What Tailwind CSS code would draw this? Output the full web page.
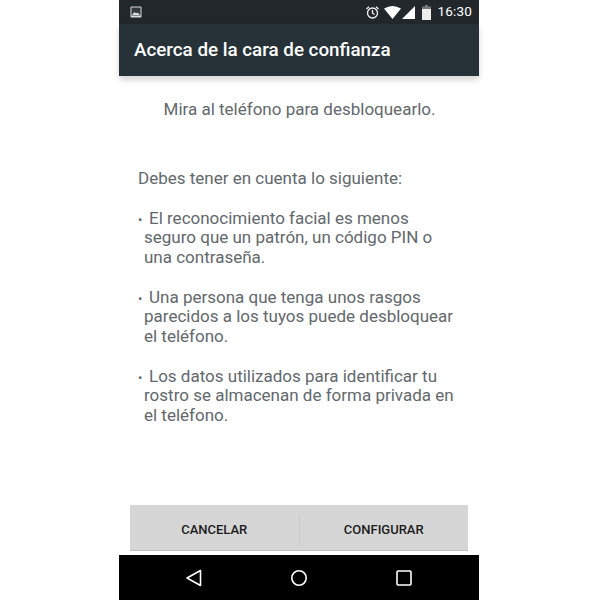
<!DOCTYPE html>
<html lang="es">
<head>
<meta charset="UTF-8">
<title>Acerca de la cara de confianza</title>
<script src="https://cdn.jsdelivr.net/npm/@tailwindcss/browser@4"></script>
</head>
<body class="bg-white font-['Roboto',sans-serif]">
<div class="mx-auto w-[360px] h-[600px] flex flex-col bg-white relative left-[-1px]">
  <!-- status bar -->
  <div class="h-[24px] bg-[#22272b] flex items-center pl-[11px] pr-[7px] text-white">
    <svg width="12" height="12" viewBox="0 0 12 12"><rect x="0.5" y="0.5" width="11" height="11" rx="1" fill="#d8d8d8"/><rect x="1.5" y="1.5" width="9" height="8" fill="#33383c"/><path d="M2 9l2.5-3 1.5 1.5 1.5-1 2.5 2.5z" fill="#e4e4e4"/></svg>
    <svg class="ml-auto" width="15" height="15" viewBox="0 0 15 15" fill="none" stroke="#f2f2f2" stroke-width="1.3"><circle cx="7.5" cy="8" r="5"/><path d="M7.5 5v3.2l2 1.3M1.5 4L4 1.8M13.500 4L11 1.800"/></svg>
    <svg class="ml-[4px]" width="17" height="13" viewBox="0 0 17 13"><path d="M0 2.500Q8.500-2.500 17 2.500L8.500 13z" fill="#fff"/></svg>
    <svg class="ml-[1px]" width="13" height="13" viewBox="0 0 13 13"><path d="M13 0V13H0z" fill="#fff"/></svg>
    <svg class="ml-[7px]" width="9" height="15" viewBox="0 0 9 15"><path d="M3 0h3v1.500h3V4H0V1.500h3z" fill="#777"/><rect y="4" width="9" height="11" fill="#ededed"/></svg>
    <span class="ml-[6px] text-[13.500px] leading-none tracking-[0.2px]">16:30</span>
  </div>
  <!-- app bar -->
  <div class="h-[52px] bg-[#263238] flex items-center pl-[15px] text-white text-[18.800px] font-medium shadow-[0_4px_6px_rgba(0,0,0,0.16)]">Acerca de la cara de confianza</div>
  <!-- content -->
  <div class="flex-1 text-[#62686c] text-[17px] leading-[19.500px]">
    <p class="mt-[24px] text-center pl-[1px]">Mira al teléfono para desbloquearlo.</p>
    <div class="mt-[49px] pl-[19px] pr-[18px] flex flex-col gap-[20.500px]">
      <p>Debes tener en cuenta lo siguiente:</p>
      <p class="pl-[6px] -indent-[6px]"><span class="inline-block w-[11px] indent-0 text-[13px] leading-none">•</span>El reconocimiento facial es menos seguro que un patrón, un código PIN o una contraseña.</p>
      <p class="pl-[6px] -indent-[6px]"><span class="inline-block w-[11px] indent-0 text-[13px] leading-none">•</span>Una persona que tenga unos rasgos parecidos a los tuyos puede desbloquear el teléfono.</p>
      <p class="pl-[6px] -indent-[6px]"><span class="inline-block w-[11px] indent-0 text-[13px] leading-none">•</span>Los datos utilizados para identificar tu rostro se almacenan de forma privada en el teléfono.</p>
    </div>
  </div>
  <!-- buttons -->
  <div class="mx-[11px] mb-[4px] h-[46px] pt-[4px] bg-[#d6d6d6] border-b border-[#bdbdbd] flex items-center text-[13px] font-medium text-[#1d1d1d]">
    <div class="flex-1 text-center">CANCELAR</div>
    <div class="w-px h-[32px] bg-[#c9c9c9]"></div>
    <div class="flex-1 text-center">CONFIGURAR</div>
  </div>
  <!-- nav bar -->
  <div class="h-[45px] bg-black flex items-center">
    <svg class="ml-[66px]" width="18" height="18" viewBox="0 0 18 18" fill="none" stroke="#fff" stroke-width="1.6"><path d="M15.500 1.500V16.500L2 9z" stroke-linejoin="round"/></svg>
    <svg class="ml-[87px]" width="18" height="18" viewBox="0 0 18 18" fill="none" stroke="#fff" stroke-width="1.6"><circle cx="9" cy="9" r="7.200"/></svg>
    <svg class="ml-[88px]" width="16" height="16" viewBox="0 0 16 16" fill="none" stroke="#fff" stroke-width="1.6"><rect x="1" y="1" width="14" height="14" rx="1"/></svg>
  </div>
</div>
</body>
</html>
